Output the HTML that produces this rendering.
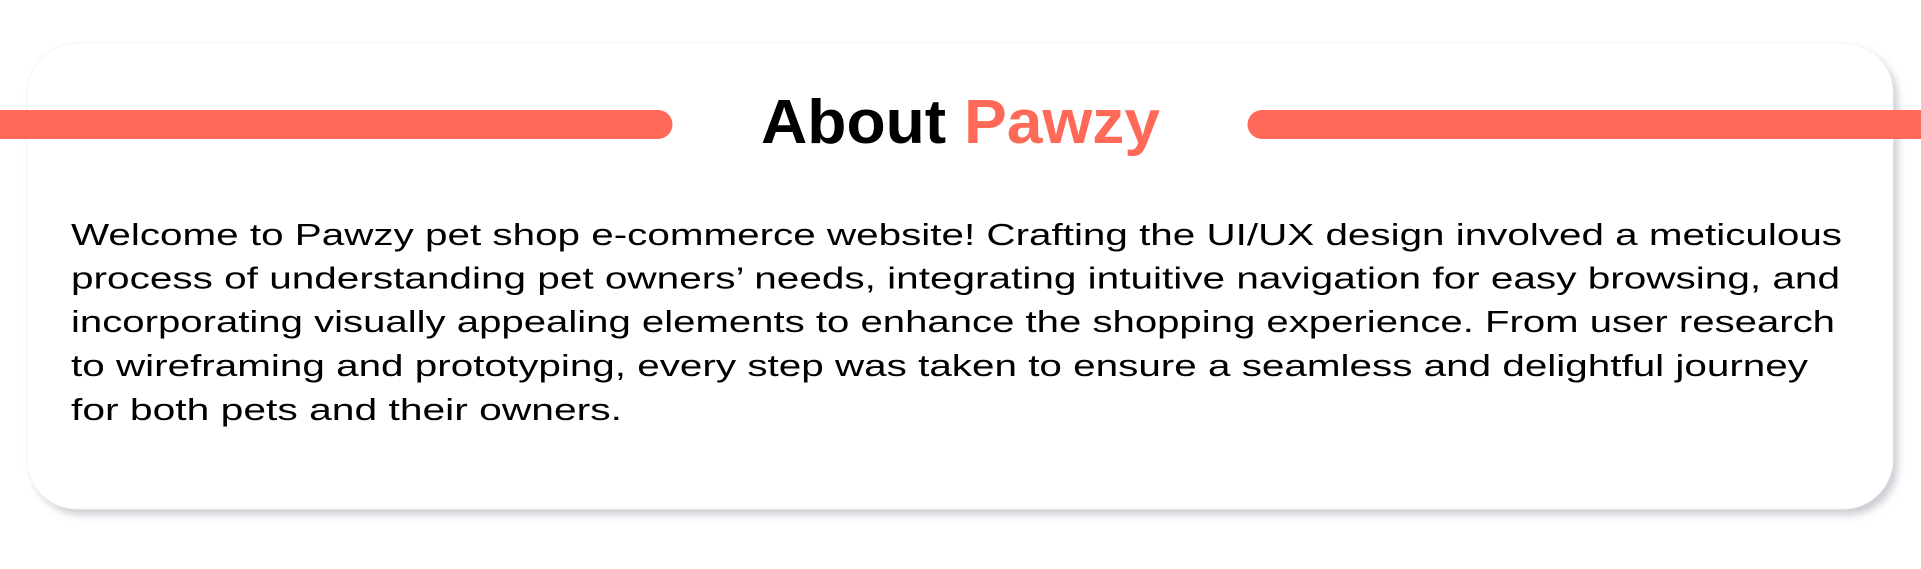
<!DOCTYPE html>
<html><head><meta charset="utf-8"><style>
html,body{margin:0;padding:0;background:#fff;width:1921px;height:569px;overflow:hidden}
</style></head><body>
<svg width="1921" height="569" viewBox="0 0 1921 569" xmlns="http://www.w3.org/2000/svg">
<defs>
<filter id="sh" x="-5%" y="-10%" width="110%" height="125%">
<feDropShadow dx="5" dy="6" stdDeviation="4" flood-color="#a9adb8" flood-opacity="0.6"/>
</filter>
</defs>
<rect x="27" y="43" width="1866" height="466" rx="50" fill="#fff" filter="url(#sh)"/>
<rect x="27" y="43" width="1866" height="466" rx="50" fill="none" stroke="#f5f5f5" stroke-width="1"/>
<path d="M0 110 H658 A14.5 14.5 0 0 1 658 139 H0 Z" fill="#ff6a58"/>
<path d="M1921 110 H1262 A14.5 14.5 0 0 0 1262 139 H1921 Z" fill="#ff6a58"/>
<text x="761" y="143" font-family="Liberation Sans, sans-serif" font-weight="bold" font-size="62" textLength="399" lengthAdjust="spacingAndGlyphs"><tspan fill="#000">About </tspan><tspan fill="#ff6a58">Pawzy</tspan></text>
<g font-family="Liberation Sans, sans-serif" font-size="31" fill="#000">
<text x="71" y="245" textLength="1771" lengthAdjust="spacingAndGlyphs">Welcome to Pawzy pet shop e-commerce website! Crafting the UI/UX design involved a meticulous</text>
<text x="71" y="288.5" textLength="1769" lengthAdjust="spacingAndGlyphs">process of understanding pet owners’ needs, integrating intuitive navigation for easy browsing, and</text>
<text x="71" y="332" textLength="1764" lengthAdjust="spacingAndGlyphs">incorporating visually appealing elements to enhance the shopping experience. From user research</text>
<text x="71" y="376" textLength="1737" lengthAdjust="spacingAndGlyphs">to wireframing and prototyping, every step was taken to ensure a seamless and delightful journey</text>
<text x="71" y="420" textLength="551" lengthAdjust="spacingAndGlyphs">for both pets and their owners.</text>
</g>
</svg>
</body></html>
